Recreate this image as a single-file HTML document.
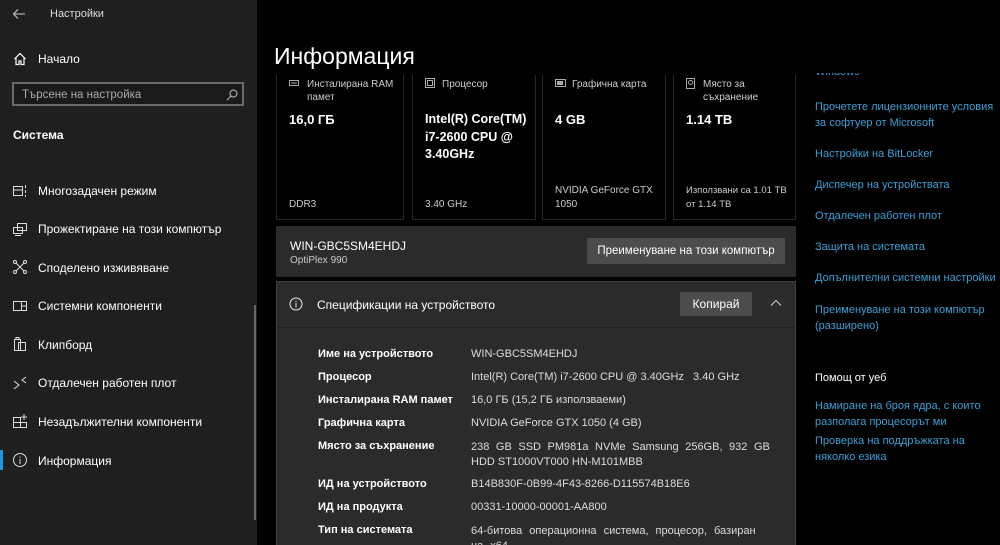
<!DOCTYPE html>
<html><head><meta charset="utf-8"><style>
*{margin:0;padding:0;box-sizing:border-box}
html,body{width:1000px;height:545px;overflow:hidden}
body{background:#000;font-family:"Liberation Sans","DejaVu Sans",sans-serif;color:#fff;position:relative}
.abs{position:absolute;white-space:nowrap}
#side{position:absolute;left:0;top:0;width:257px;height:545px;background:#1f1f1f}
.nav{position:absolute;left:38px;font-size:12px;color:#fff}
.ic{position:absolute;left:12px}
.card{position:absolute;top:60px;height:160px;background:#000;border:1px solid #262626}
.lab{font-size:10px;color:#ccc;line-height:13px}
.val{font-size:13px;font-weight:bold;line-height:17px}
.sm{font-size:10px;color:#ccc;line-height:14px}
.lk{position:absolute;left:815px;font-size:11px;color:#3b9fd6;line-height:16px;white-space:nowrap}
.sl{position:absolute;left:318px;font-size:11px;font-weight:bold;white-space:nowrap}
.sv{position:absolute;left:471px;font-size:11px;color:#ddd;white-space:nowrap}
</style></head><body>
<div id="side">
 <svg class="abs" style="left:12px;top:8px" width="14" height="12" viewBox="0 0 14 12"><path d="M13 6H2M6 1.5L1.5 6L6 10.5" stroke="#ccc" fill="none" stroke-width="1"/></svg>
 <div class="abs" style="left:50px;top:8px;font-size:11px;color:#ddd">Настройки</div>
 <svg class="abs" style="left:13px;top:52px" width="14" height="14" viewBox="0 0 14 14"><path d="M1.5 7L7 1.5L12.5 7M3 5.5V12.5H6V9H8V12.5H11V5.5" stroke="#fff" fill="none" stroke-width="1.2"/></svg>
 <div class="nav" style="top:52px">Начало</div>
 <div class="abs" style="left:12px;top:82px;width:232px;height:24px;border:2px solid #6c6c6c;background:#1a1a1a"></div>
 <div class="abs" style="left:22px;top:89px;font-size:11.5px;color:#aaa">Търсене на настройка</div>
 <svg class="abs" style="left:226px;top:89px" width="12" height="12" viewBox="0 0 12 12"><circle cx="7.5" cy="4.5" r="3.5" stroke="#bbb" fill="none"/><path d="M5 7L1 11" stroke="#bbb"/></svg>
 <div class="abs" style="left:13px;top:128px;font-size:12px;font-weight:bold">Система</div>

 <svg class="ic" style="top:183px" width="16" height="16" viewBox="0 0 16 16" fill="none" stroke="#ddd"><rect x="1.5" y="3.5" width="9" height="9"/><path d="M1.5 7h9M13.5 2v3M13.5 7v3M13.5 12v2"/></svg>
 <div class="nav" style="top:184px">Многозадачен режим</div>
 <svg class="ic" style="top:221px" width="16" height="16" viewBox="0 0 16 16" fill="none" stroke="#ddd"><rect x="5.5" y="2.5" width="9" height="7"/><rect x="1.5" y="6.5" width="9" height="6"/><path d="M3 14.5h6"/></svg>
 <div class="nav" style="top:222px">Прожектиране на този компютър</div>
 <svg class="ic" style="top:259px" width="16" height="16" viewBox="0 0 16 16" fill="none" stroke="#ddd"><circle cx="3" cy="3" r="1.5"/><circle cx="13" cy="3" r="1.5"/><circle cx="3" cy="13" r="1.5"/><circle cx="13" cy="13" r="1.5"/><path d="M4 4l8 8M12 4l-8 8"/></svg>
 <div class="nav" style="top:261px">Споделено изживяване</div>
 <svg class="ic" style="top:298px" width="16" height="16" viewBox="0 0 16 16" fill="none" stroke="#ddd"><rect x="1.5" y="3.5" width="13" height="9"/><path d="M9.5 3.5v9M9.5 8h5"/></svg>
 <div class="nav" style="top:299px">Системни компоненти</div>
 <svg class="ic" style="top:336px" width="16" height="16" viewBox="0 0 16 16" fill="none" stroke="#ddd"><rect x="2.5" y="3.5" width="6" height="11"/><rect x="6.5" y="6.5" width="7" height="8"/><path d="M4 3.5V1.5h3v2"/></svg>
 <div class="nav" style="top:338px">Клипборд</div>
 <svg class="ic" style="top:375px" width="16" height="16" viewBox="0 0 16 16" fill="none" stroke="#ddd"><path d="M2 6l5 4l-5 4M14 2l-4 3l4 3"/></svg>
 <div class="nav" style="top:376px">Отдалечен работен плот</div>
 <svg class="ic" style="top:413px" width="16" height="16" viewBox="0 0 16 16" fill="none" stroke="#ddd"><path d="M1.5 4.5h7v10h-7zM1.5 9.5h13v5h-6M8.5 4.5v10M12 1v6M9 4h6"/></svg>
 <div class="nav" style="top:415px">Незадължителни компоненти</div>
 <div class="abs" style="left:0;top:450px;width:3px;height:20px;background:#1a9be0"></div>
 <svg class="ic" style="top:452px" width="16" height="16" viewBox="0 0 16 16" fill="none" stroke="#ddd"><circle cx="8" cy="8" r="6.5"/><path d="M8 7v5M8 4.5v1.2"/></svg>
 <div class="nav" style="top:454px">Информация</div>
 <div class="abs" style="left:254px;top:305px;width:2px;height:215px;background:#666"></div>
</div>

<div class="abs" style="left:928px;top:13px;width:10px;height:1px;background:#ccc"></div>
<svg class="abs" style="left:965px;top:8px" width="10" height="10" viewBox="0 0 10 10" fill="none" stroke="#ccc"><rect x="0.5" y="2.5" width="7" height="7"/><path d="M2.5 2.5v-2h7v7h-2"/></svg>

<div class="card" style="left:276px;width:128px"></div>
<div class="card" style="left:412px;width:124px"></div>
<div class="card" style="left:542px;width:124px"></div>
<div class="card" style="left:673px;width:123px"></div>
<div class="abs" style="left:257px;top:0;width:743px;height:75px;background:#000"></div>
<div class="abs" style="left:274px;top:43px;font-size:23px;color:#fff">Информация</div>

<svg class="abs" style="left:289px;top:79px" width="10" height="8"><rect x="0.5" y="1.5" width="9" height="5" fill="none" stroke="#aaa"/><path d="M2 4h6" stroke="#aaa"/></svg>
<div class="abs lab" style="left:307px;top:78px">Инсталирана RAM<br>памет</div>
<div class="abs val" style="left:289px;top:111px">16,0 ГБ</div>
<div class="abs sm" style="left:289px;top:198px">DDR3</div>

<svg class="abs" style="left:425px;top:78px" width="10" height="10" fill="none" stroke="#aaa"><rect x="0.5" y="0.5" width="9" height="9"/><rect x="2.5" y="2.5" width="5" height="5"/></svg>
<div class="abs lab" style="left:442px;top:78px">Процесор</div>
<div class="abs val" style="left:425px;top:111px;line-height:17.5px;font-size:12.5px">Intel(R) Core(TM)<br>i7-2600 CPU @<br>3.40GHz</div>
<div class="abs sm" style="left:425px;top:198px">3.40 GHz</div>

<svg class="abs" style="left:555px;top:79px" width="11" height="9" fill="none" stroke="#aaa"><rect x="0.5" y="0.5" width="10" height="7"/><rect x="2.5" y="2.5" width="5" height="3" fill="#aaa"/></svg>
<div class="abs lab" style="left:572px;top:78px">Графична карта</div>
<div class="abs val" style="left:555px;top:111px">4 GB</div>
<div class="abs sm" style="left:555px;top:184px">NVIDIA GeForce GTX<br>1050</div>

<svg class="abs" style="left:686px;top:78px" width="9" height="11" fill="none" stroke="#aaa"><rect x="0.5" y="0.5" width="8" height="10"/><circle cx="4.5" cy="4.5" r="2"/></svg>
<div class="abs lab" style="left:703px;top:78px">Място за<br>съхранение</div>
<div class="abs val" style="left:686px;top:111px">1.14 TB</div>
<div class="abs sm" style="left:686px;top:184px;font-size:9.5px">Използвани са 1.01 TB<br>от 1.14 TB</div>

<div class="abs" style="left:276px;top:226px;width:520px;height:51px;background:#2b2b2b"></div>
<div class="abs" style="left:290px;top:239px;font-size:12px">WIN-GBC5SM4EHDJ</div>
<div class="abs" style="left:290px;top:255px;font-size:10px;color:#ccc">OptiPlex 990</div>
<div class="abs" style="left:587px;top:238px;width:198px;height:26px;background:#4c4c4c;font-size:11.5px;text-align:center;line-height:26px">Преименуване на този компютър</div>

<div class="abs" style="left:276px;top:281px;width:520px;height:264px;background:#2b2b2b;border:1px solid #3f3f3f;border-bottom:none"></div>
<div class="abs" style="left:277px;top:327px;width:518px;height:1px;background:#202020"></div>
<svg class="abs" style="left:289px;top:297px" width="14" height="14" fill="none" stroke="#eee"><circle cx="7" cy="7" r="6"/><path d="M7 6v4.5M7 3.8v1.2"/></svg>
<div class="abs" style="left:317px;top:298px;font-size:12px">Спецификации на устройството</div>
<div class="abs" style="left:680px;top:292px;width:72px;height:24px;background:#4c4c4c;font-size:12px;text-align:center;line-height:24px">Копирай</div>
<svg class="abs" style="left:770px;top:299px" width="12" height="8" fill="none" stroke="#ccc"><path d="M1 6.5L6 1.5L11 6.5"/></svg>

<div class="sl" style="top:348px">Име на устройството</div><div class="sv" style="top:348px">WIN-GBC5SM4EHDJ</div>
<div class="sl" style="top:371px">Процесор</div><div class="sv" style="top:371px">Intel(R) Core(TM) i7-2600 CPU @ 3.40GHz&nbsp;&nbsp;&nbsp;3.40 GHz</div>
<div class="sl" style="top:394px">Инсталирана RAM памет</div><div class="sv" style="top:394px">16,0 ГБ (15,2 ГБ използваеми)</div>
<div class="sl" style="top:417px">Графична карта</div><div class="sv" style="top:417px">NVIDIA GeForce GTX 1050 (4 GB)</div>
<div class="sl" style="top:440px">Място за съхранение</div><div class="sv" style="top:440px;line-height:15px;word-spacing:3.5px">238 GB SSD PM981a NVMe Samsung 256GB, 932 GB<br><span style="word-spacing:0">HDD ST1000VT000 HN-M101MBB</span></div>
<div class="sl" style="top:478px">ИД на устройството</div><div class="sv" style="top:478px">B14B830F-0B99-4F43-8266-D115574B18E6</div>
<div class="sl" style="top:501px">ИД на продукта</div><div class="sv" style="top:501px">00331-10000-00001-AA800</div>
<div class="sl" style="top:524px">Тип на системата</div><div class="sv" style="top:524px;line-height:15px;word-spacing:4px">64-битова операционна система, процесор, базиран<br>на x64</div>

<div class="lk" style="top:64px;height:12px;overflow:hidden;line-height:16px">Windows</div>
<div class="abs" style="left:800px;top:0;width:200px;height:73px;background:#000"></div>
<div class="lk" style="top:99px">Прочетете лицензионните условия<br>за софтуер от Microsoft</div>
<div class="lk" style="top:146px">Настройки на BitLocker</div>
<div class="lk" style="top:177px">Диспечер на устройствата</div>
<div class="lk" style="top:208px">Отдалечен работен плот</div>
<div class="lk" style="top:239px">Защита на системата</div>
<div class="lk" style="top:270px">Допълнителни системни настройки</div>
<div class="lk" style="top:302px">Преименуване на този компютър<br>(разширено)</div>
<div class="lk" style="top:370px;color:#fff">Помощ от уеб</div>
<div class="lk" style="top:398px">Намиране на броя ядра, с които<br>разполага процесорът ми</div>
<div class="lk" style="top:433px">Проверка на поддръжката на<br>няколко езика</div>
</body></html>
